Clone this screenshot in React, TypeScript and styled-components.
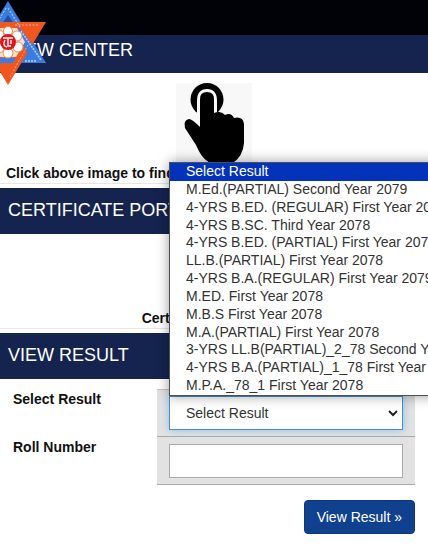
import React from "react";
import styled, { createGlobalStyle } from "styled-components";

const GlobalStyle = createGlobalStyle`
  *, *::before, *::after { box-sizing: border-box; }
  body {
    margin: 0;
    background: #fff;
    color: #111;
    font-family: "Liberation Sans", Arial, sans-serif;
    font-size: 14px;
    line-height: 20px;
  }
`;

const Page = styled.div`
  position: relative;
  min-height: 100vh;
  overflow: hidden;
`;

const TopBar = styled.header`
  height: 35px;
  background: #000208;
`;

const LogoLink = styled.a`
  position: absolute;
  top: 0;
  left: 0;
  line-height: 0;
`;

const SectionTitle = styled.h2<{ $compact?: boolean }>`
  margin: 0;
  padding: ${(p) => (p.$compact ? "3px 8px 11px" : "10px 8px 12px")};
  background: #15244f;
  color: #fff;
  font-size: 18px;
  font-weight: 400;
  line-height: 24px;
`;

const LinkPanel = styled.section`
  display: flex;
  flex-direction: column;
  align-items: center;
  justify-content: flex-end;
  margin-bottom: 4px;
  border-bottom: 1px solid #e6e6e6;
`;

const CenterPanel = styled(LinkPanel)`
  padding-top: 10px;
`;

const PortalPanel = styled(LinkPanel)`
  min-height: 95px;
`;

const ImageButton = styled.a`
  width: 76px;
  height: 80px;
  background: #f8f8f8;
`;

const Caption = styled.p`
  margin: 0;
  font-weight: 700;
  white-space: nowrap;
`;

const Form = styled.form`
  padding: 10px 13px 16px;
`;

const Field = styled.div`
  display: grid;
  grid-template-columns: 144px 1fr;
`;

const Label = styled.label`
  font-weight: 700;
`;

const Cell = styled.div<{ $first?: boolean }>`
  position: relative;
  height: 48px;
  padding: ${(p) => (p.$first ? "6px 12px" : "7px 12px 6px")};
  background: #e2e2e2;
  border-bottom: 1px solid #a9a9a9;
  border-top: ${(p) => (p.$first ? "1px solid #c4c4c4" : "0")};
`;

const Select = styled.select`
  display: block;
  width: 100%;
  height: 34px;
  padding: 0 16px;
  border: 1px solid #4a8fc7;
  border-radius: 0;
  outline: 0;
  appearance: none;
  background: #fff;
  box-shadow: 0 0 8px rgba(102, 175, 233, 0.7);
  color: #333;
  font: inherit;
`;

const Chevron = styled.svg`
  position: absolute;
  top: 19px;
  right: 17px;
  pointer-events: none;
`;

const Input = styled.input`
  display: block;
  width: 100%;
  height: 34px;
  padding: 0 12px;
  border: 1px solid #aaa;
  border-radius: 0;
  background: #fff;
  font: inherit;
`;

const Options = styled.ul`
  position: absolute;
  z-index: 2;
  bottom: 40px;
  left: 12px;
  display: grid;
  grid-auto-rows: 1fr;
  width: 320px;
  height: 234px;
  margin: 0;
  padding: 0;
  border: 1px solid #4b5158;
  background: #fff;
  box-shadow: 0 0 12px rgba(0, 0, 0, 0.4);
  list-style: none;
`;

const Option = styled.li<{ $active?: boolean }>`
  padding-left: 16px;
  background: ${(p) => (p.$active ? "#0433bb" : "transparent")};
  color: ${(p) => (p.$active ? "#fff" : "#333")};
  line-height: 16px;
  white-space: nowrap;
`;

const Actions = styled.div`
  display: flex;
  justify-content: flex-end;
  margin-top: 15px;
`;

const Submit = styled.button`
  height: 34px;
  padding: 0 12px;
  border: 1px solid #0c397d;
  border-radius: 4px;
  background: #10418f;
  color: #fff;
  font: inherit;
`;

const results = [
  "Select Result",
  "M.Ed.(PARTIAL) Second Year 2079",
  "4-YRS B.ED. (REGULAR) First Year 2079",
  "4-YRS B.SC. Third Year 2078",
  "4-YRS B.ED. (PARTIAL) First Year 2078",
  "LL.B.(PARTIAL) First Year 2078",
  "4-YRS B.A.(REGULAR) First Year 2079",
  "M.ED. First Year 2078",
  "M.B.S First Year 2078",
  "M.A.(PARTIAL) First Year 2078",
  "3-YRS LL.B(PARTIAL)_2_78 Second Year",
  "4-YRS B.A.(PARTIAL)_1_78 First Year",
  "M.P.A._78_1 First Year 2078",
];

function Logo() {
  return (
    <svg width="47" height="86" viewBox="0 0 47 86" aria-hidden="true">
      <path d="M8 1L46 63H-30Z" fill="#3b7ce0" />
      <path d="M8 15L16 27H0Z" fill="#1d4f9e" />
      <path d="M-30 22H46L8 85Z" fill="#f0561f" />
      <path d="M19 27L46 63H33L17 34Z" fill="#3b7ce0" />
      <path d="M0 58H16L13 63H0Z" fill="#3b7ce0" />
      <path d="M8 8L20 27M6 8L0 18" stroke="#a9c8f8" strokeWidth="1.2" strokeDasharray="2 1.5" />
      <path d="M21 31L41 60M25 61H36" stroke="#b7cff8" strokeWidth="1.5" strokeDasharray="2 1" />
      <path d="M15 25H38M28 45L10 77" stroke="#fba98a" strokeWidth="1" strokeDasharray="2 1.5" />
      <path d="M0 28H17L25 42L16 57H0Z" fill="#f9dfd2" />
      <g fill="#fff" stroke="#f4874f" strokeWidth="1">
        <circle cx="8" cy="31" r="4.5" />
        <circle cx="17" cy="36" r="5" />
        <circle cx="18" cy="47" r="5" />
        <circle cx="8" cy="53" r="5" />
        <circle cx="-1" cy="48" r="5" />
        <circle cx="-1" cy="35" r="5" />
      </g>
      <circle cx="8" cy="42" r="8" fill="#e3141d" />
      <path
        d="M3 38H13M8 38V46H11M5 40Q2 46 7 47M11 40V44"
        fill="none"
        stroke="#fff"
        strokeWidth="1.4"
      />
    </svg>
  );
}

function TapHand() {
  return (
    <svg width="76" height="80" viewBox="0 0 76 80" aria-hidden="true">
      <circle cx="31" cy="16.5" r="16.5" />
      <path d="M21 42V18Q21 6 31 6Q41 6 41 18V32H34V42Z" fill="#f8f8f8" />
      <path d="M24 46V16Q24 9 31 9Q38 9 38 16V30Q45 27 49 32Q55 29 58 35Q67 33 68 41V60Q67 73 57 80H34C27 76 23 69 20 62L9 45Q7 37 13 36Q16 36 24 44Z" />
    </svg>
  );
}

export default function App() {
  return (
    <>
      <GlobalStyle />
      <Page>
        <TopBar />
        <SectionTitle $compact>VIEW CENTER</SectionTitle>
        <LogoLink href="#" aria-label="Home">
          <Logo />
        </LogoLink>
        <CenterPanel>
          <ImageButton href="#" aria-label="Find exam center">
            <TapHand />
          </ImageButton>
          <Caption>Click above image to find the exam center of your examination</Caption>
        </CenterPanel>
        <SectionTitle>CERTIFICATE PORTAL</SectionTitle>
        <PortalPanel>
          <Caption>Certificate Portal Link</Caption>
        </PortalPanel>
        <SectionTitle>VIEW RESULT</SectionTitle>
        <Form onSubmit={(e) => e.preventDefault()}>
          <Field>
            <Label htmlFor="result">Select Result</Label>
            <Cell $first>
              <Select id="result" defaultValue="Select Result">
                {results.map((r) => (
                  <option key={r}>{r}</option>
                ))}
              </Select>
              <Chevron width="10" height="8" viewBox="0 0 10 8" aria-hidden="true">
                <path d="M1 2L5 6L9 2" fill="none" stroke="#222" strokeWidth="2" />
              </Chevron>
              <Options role="listbox" aria-label="Results">
                {results.map((r, i) => (
                  <Option key={r} role="option" aria-selected={i === 0} $active={i === 0}>
                    {r}
                  </Option>
                ))}
              </Options>
            </Cell>
          </Field>
          <Field>
            <Label htmlFor="roll">Roll Number</Label>
            <Cell>
              <Input id="roll" type="text" />
            </Cell>
          </Field>
          <Actions>
            <Submit type="submit">View Result »</Submit>
          </Actions>
        </Form>
      </Page>
    </>
  );
}
